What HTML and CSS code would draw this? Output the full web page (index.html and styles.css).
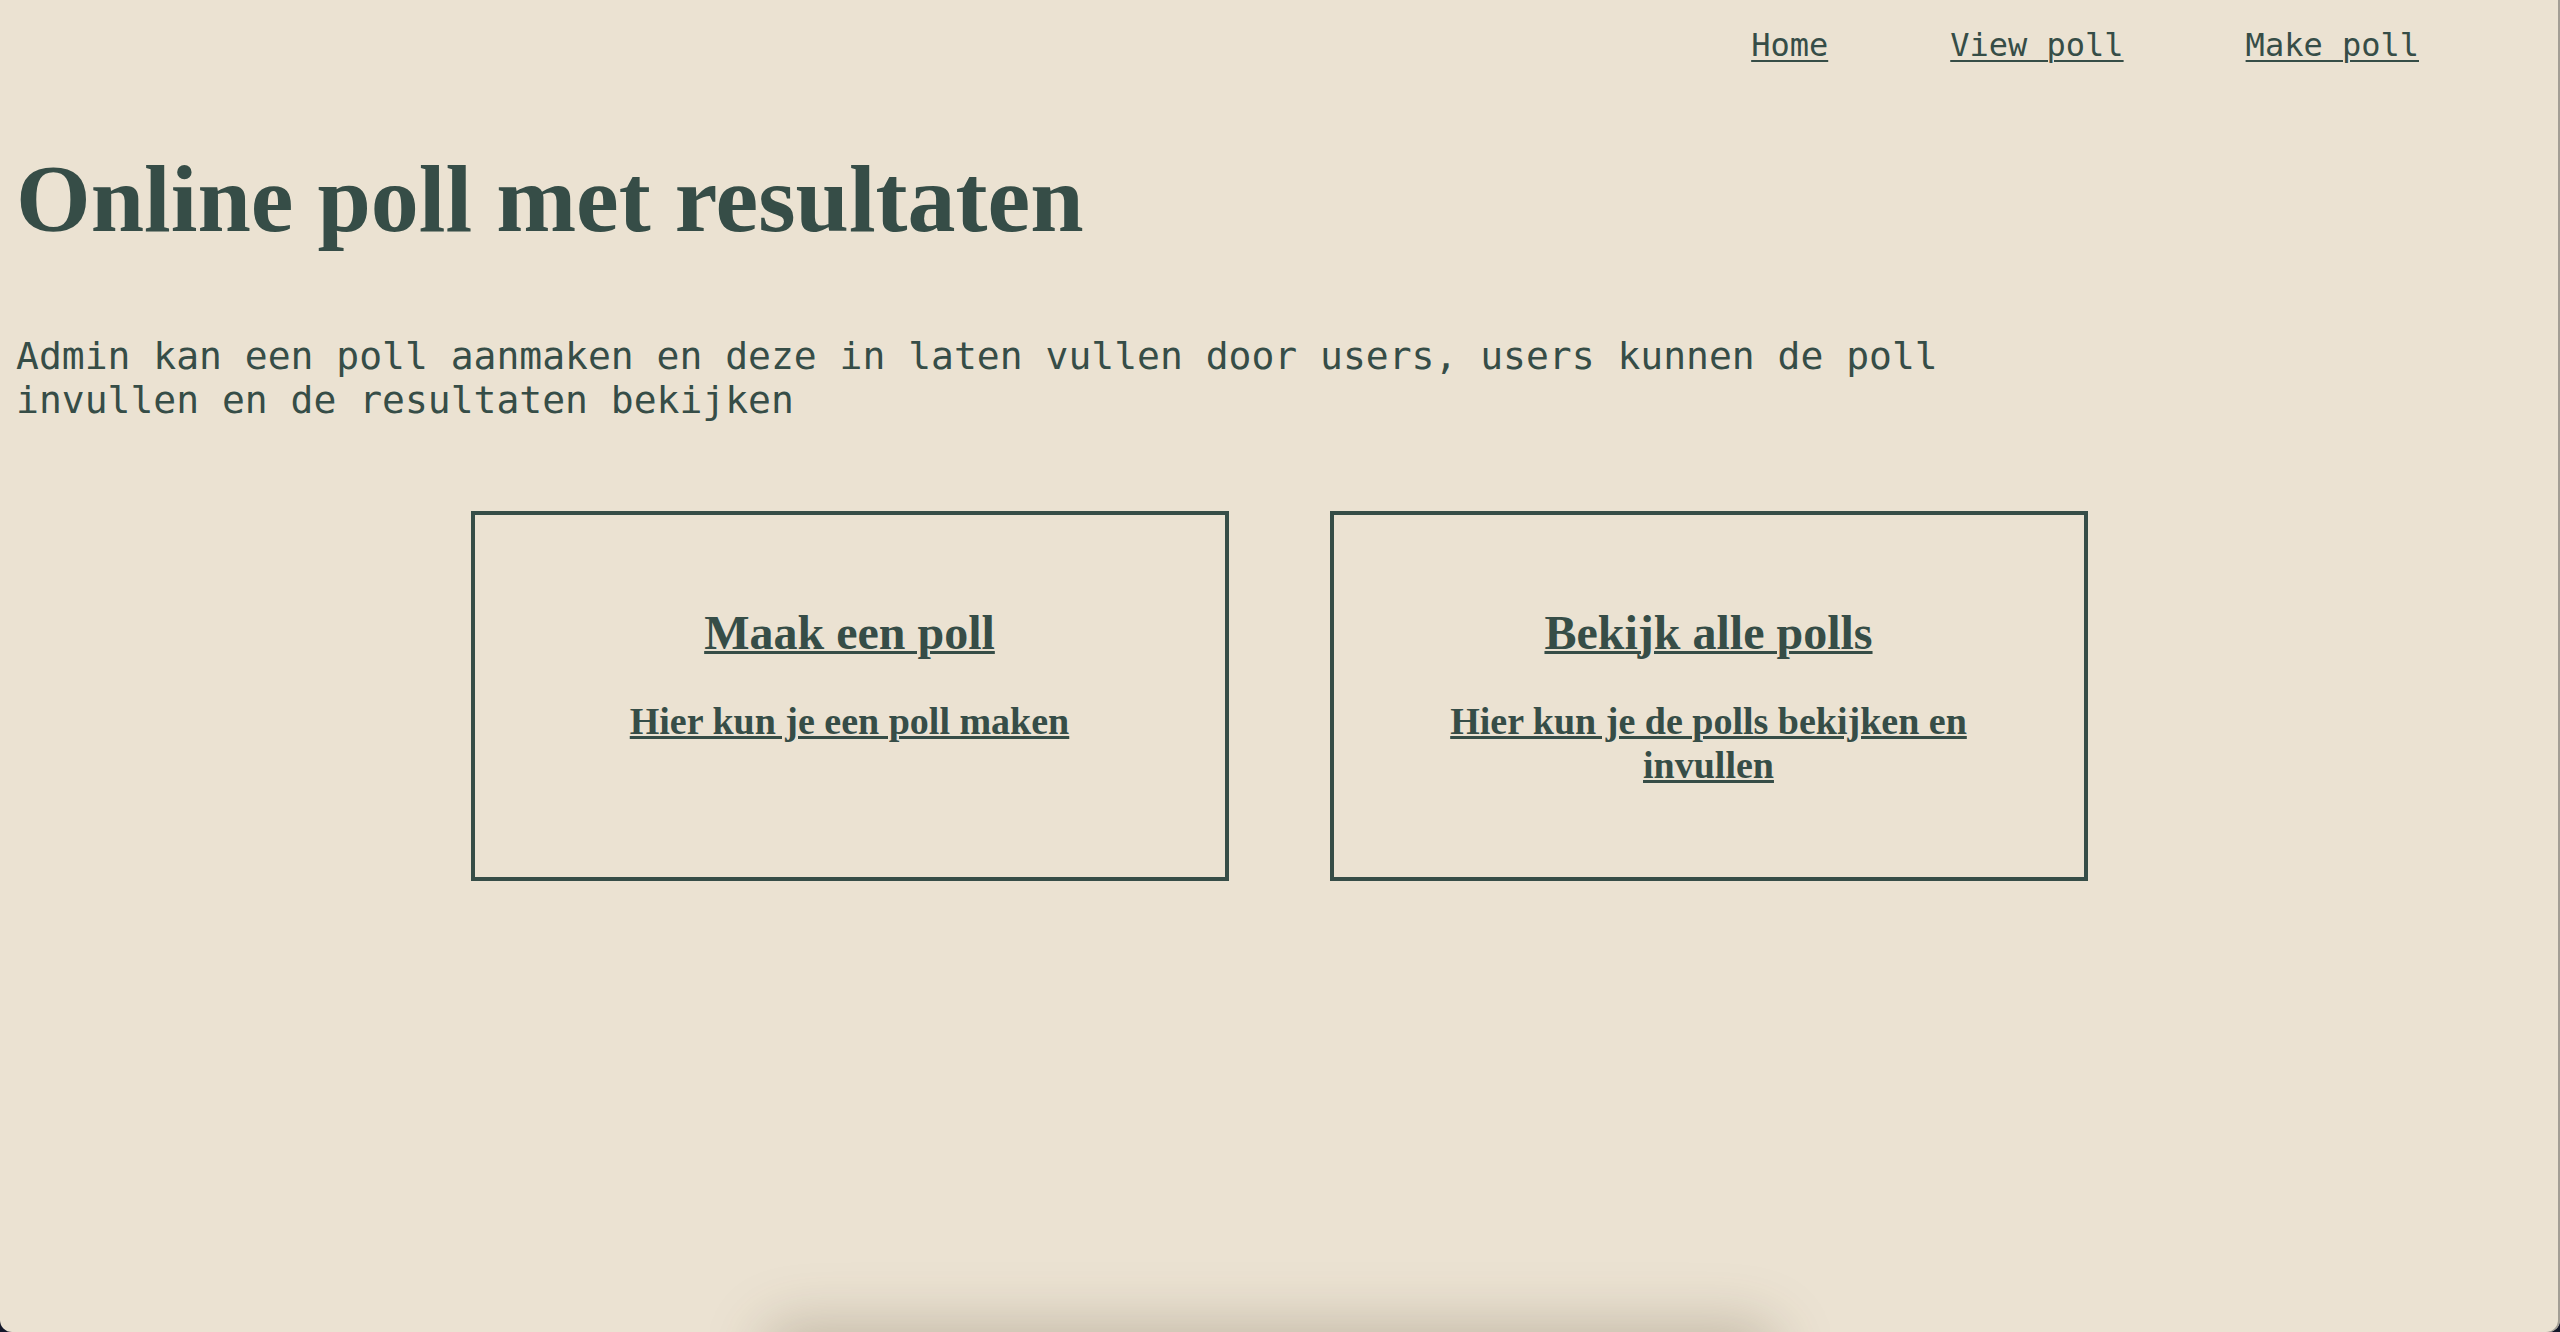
FILE: index.html
```html
<!DOCTYPE html>
<html lang="nl">
<head>
<meta charset="utf-8">
<title>Online poll met resultaten</title>
<link rel="stylesheet" href="styles.css">
</head>
<body>
<div class="window">
  <nav class="topnav">
    <a href="#" class="navlink">Home</a>
    <a href="#" class="navlink">View poll</a>
    <a href="#" class="navlink">Make poll</a>
  </nav>
  <main class="content">
    <h1 class="title">Online poll met resultaten</h1>
    <p class="intro">Admin kan een poll aanmaken en deze in laten vullen door users, users kunnen de poll invullen en de resultaten bekijken</p>
    <section class="cards">
      <div class="card">
        <a href="#" class="card-title">Maak een poll</a>
        <a href="#" class="card-text">Hier kun je een poll maken</a>
      </div>
      <div class="card">
        <a href="#" class="card-title">Bekijk alle polls</a>
        <a href="#" class="card-text">Hier kun je de polls bekijken en invullen</a>
      </div>
    </section>
  </main>
  <div class="dock-shadow"></div>
</div>
</body>
</html>
```

FILE: styles.css
```css
html {
  background: #14182a;
}
body {
  margin: 0;
  color: #364d47;
}
.window {
  position: relative;
  min-height: 100vh;
  box-sizing: border-box;
  background: #ebe2d2;
  border-radius: 0 0 12px 12px;
  overflow: hidden;
  box-shadow: inset -2px 0 0 #a39e95;
}
.topnav {
  display: flex;
  justify-content: flex-end;
  gap: 122px;
  padding: 26px 141px 0 0;
}
.navlink {
  font-family: "DejaVu Sans Mono", monospace;
  font-size: 32px;
  color: #364d47;
  text-decoration: underline;
  text-decoration-thickness: 2px;
  text-underline-offset: 4px;
}
.content {
  padding: 0 16px;
}
.title {
  margin: 79px 0 0;
  font-family: "Liberation Serif", serif;
  font-weight: bold;
  font-size: 96px;
  line-height: normal;
  color: #364d47;
}
.intro {
  margin: 80px 0 0;
  max-width: 2010px;
  font-family: "DejaVu Sans Mono", monospace;
  font-size: 38px;
  line-height: normal;
  color: #364d47;
}
.cards {
  display: flex;
  justify-content: center;
  gap: 101px;
  margin-top: 89px;
  margin-left: -18px;
  margin-right: -16px;
}
.card {
  width: 758px;
  box-sizing: border-box;
  border: 4px solid #364d47;
  padding: 90px 80px;
  display: flex;
  flex-direction: column;
  align-items: center;
  text-align: center;
  gap: 39px;
}
.card-title {
  font-family: "Liberation Serif", serif;
  font-weight: bold;
  font-size: 48px;
  line-height: normal;
  color: #364d47;
  text-decoration-thickness: 3px;
}
.card-text {
  font-family: "Liberation Serif", serif;
  font-weight: bold;
  font-size: 38px;
  line-height: normal;
  color: #364d47;
  text-decoration-thickness: 3px;
}
.dock-shadow {
  position: absolute;
  left: 760px;
  bottom: -60px;
  width: 1020px;
  height: 70px;
  border-radius: 40px;
  background: rgba(60, 45, 20, 0.22);
  filter: blur(28px);
}
```
